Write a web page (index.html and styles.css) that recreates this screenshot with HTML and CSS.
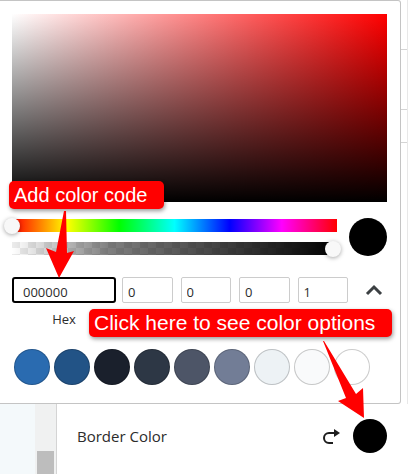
FILE: index.html
```html
<!DOCTYPE html>
<html lang="en">
<head>
  <meta charset="UTF-8">
  <meta name="viewport" content="width=device-width, initial-scale=1.0">
  <title>Border Color</title>
  <link rel="stylesheet" href="styles.css">
</head>

<body>
  <div class="picker-row">
    <div class="picker">
      <div class="saturation"></div>

      <div class="sliders">
        <div class="tracks">
          <div class="track hue"><span class="handle"></span></div>
          <div class="track alpha"><span class="handle"></span></div>
        </div>
        <div class="preview"></div>
      </div>

      <div class="fields">
        <div class="hex-field">
          <input type="text" id="hex" value="000000">
          <label for="hex">Hex</label>
        </div>
        <div class="rgba-fields">
          <input type="text" aria-label="Red" value="0">
          <input type="text" aria-label="Green" value="0">
          <input type="text" aria-label="Blue" value="0">
          <input type="text" aria-label="Alpha" value="1">
        </div>
        <button class="toggle-btn" aria-label="Hide fields">
          <svg width="18" height="12" viewBox="0 0 18 12"><path d="M2 10 L9 3 L16 10" fill="none" stroke="#3c4043" stroke-width="3"/></svg>
        </button>
      </div>

      <div class="swatches">
        <button class="swatch blue" aria-label="Blue"></button>
        <button class="swatch dark-blue" aria-label="Dark blue"></button>
        <button class="swatch ink" aria-label="Ink"></button>
        <button class="swatch slate" aria-label="Slate"></button>
        <button class="swatch gray" aria-label="Gray"></button>
        <button class="swatch light-gray" aria-label="Light gray"></button>
        <button class="swatch mist" aria-label="Mist"></button>
        <button class="swatch snow" aria-label="Snow"></button>
        <button class="swatch white" aria-label="White"></button>
      </div>
    </div>
    <div class="edge">
      <div class="edge-top"></div>
      <div class="edge-title"></div>
      <div class="edge-tab"></div>
      <div class="edge-rest"></div>
    </div>
  </div>

  <div class="settings-row">
    <div class="canvas"></div>
    <div class="scrollbar"><div class="thumb"></div></div>
    <div class="setting">
      <span class="setting-label">Border Color</span>
      <button class="reset-btn" aria-label="Reset">
        <svg width="18" height="18" viewBox="0 0 18 18"><path d="M12 5 H6 A5 5 0 0 0 6 15 H10" fill="none" stroke="#1e1e1e" stroke-width="2"/><path d="M11 1 L17 5 L11 9 Z" fill="#1e1e1e"/></svg>
      </button>
      <button class="color-btn" aria-label="Choose border color"></button>
    </div>
  </div>

  <div class="callout code-callout">Add color code</div>
  <svg class="arrow code-arrow" width="30" height="70" viewBox="0 0 30 70"><path d="M18 2 L20 2 L21 44 L28 42 L13 69 L0 39 L10 43 Z" fill="#f00"/></svg>

  <div class="callout options-callout">Click here to see color options</div>
  <svg class="arrow options-arrow" width="44" height="80" viewBox="0 0 44 80"><path d="M1 2 L2 2 L34 55 L41 49 L42 79 L16 62 L24 59 Z" fill="#f00"/></svg>
</body>
</html>
```
FILE: styles.css
```css
* {
  box-sizing: border-box;
}

body {
  margin: 0;
  min-height: 100vh;
  display: flex;
  flex-direction: column;
  position: relative;
  overflow: hidden;
  background: #fff;
  color: #2c2c2c;
  font-family: "Open Sans", "Noto Sans", sans-serif;
}

button {
  padding: 0;
  border: none;
  background: none;
  cursor: pointer;
}

svg {
  display: block;
}

.picker-row {
  display: flex;
}

.picker {
  flex: 1;
  min-width: 0;
  padding: 13px 13px 18px 12px;
  border: 1px solid #c4c4c4;
  border-left: none;
  border-radius: 0 3px 3px 0;
  background: #fff;
}

.saturation {
  height: 188px;
  background: linear-gradient(to top, #000, transparent), linear-gradient(to right, #fff, #f00);
}

.sliders {
  display: flex;
  gap: 12px;
  margin-top: 16px;
}

.tracks {
  flex: 1;
  display: flex;
  flex-direction: column;
  gap: 10px;
  padding-top: 1px;
}

.track {
  height: 13px;
  position: relative;
}

.hue {
  background: linear-gradient(to right, #f00, #ff0 17%, #0f0 33%, #0ff 50%, #00f 67%, #f0f 83%, #f00);
}

.alpha {
  background: linear-gradient(to right, transparent, rgba(0, 0, 0, 0.5) 30%, #000), repeating-conic-gradient(#fff 0 25%, #ececec 0 50%) 0 0 / 16px 12px;
}

.handle {
  position: absolute;
  top: -1px;
  left: -8px;
  width: 16px;
  height: 16px;
  border-radius: 50%;
  background: #f8f8f8;
  box-shadow: 0 1px 4px rgba(0, 0, 0, 0.35);
}

.alpha .handle {
  left: auto;
  right: -4px;
}

.preview {
  width: 38px;
  height: 38px;
  border-radius: 50%;
  background: #000;
}

.fields {
  display: flex;
  align-items: flex-start;
  margin-top: 21px;
}

.fields input {
  display: block;
  width: 100%;
  min-width: 0;
  height: 26px;
  padding: 3px 5px 0;
  border: 1px solid #ccc;
  border-radius: 2px;
  background: #fff;
  color: #2c2c2c;
  font-family: inherit;
  font-size: 13px;
}

.hex-field {
  width: 104px;
  margin-right: 6px;
  text-align: center;
}

.hex-field input {
  padding-left: 9px;
  border: 2px solid #000;
  border-radius: 3px;
}

.hex-field label {
  display: block;
  margin-top: 6px;
  font-size: 13px;
  line-height: 20px;
}

.rgba-fields {
  flex: 1;
  display: flex;
  gap: 8px;
}

.toggle-btn {
  display: flex;
  align-items: center;
  justify-content: center;
  width: 18px;
  height: 26px;
  margin: 0 4px 0 17px;
}

.swatches {
  display: flex;
  gap: 4px;
  margin-top: 20px;
  padding-left: 2px;
}

.swatch {
  width: 36px;
  height: 36px;
  border: 1px solid rgba(0, 0, 0, 0.2);
  border-radius: 50%;
}

.blue { background: #2a6bb0; }
.dark-blue { background: #225386; }
.ink { background: #1a202c; }
.slate { background: #2d3745; }
.gray { background: #4d5567; }
.light-gray { background: #727d96; }
.mist { background: #edf2f5; }
.snow { background: #f9fafb; }
.white { background: #fff; }

/* sidebar peeking out behind the picker */
.edge {
  width: 7px;
  display: flex;
  flex-direction: column;
  border-right: 1px solid #e8e8e8;
}

.edge-top,
.edge-title,
.edge-tab {
  border-bottom: 1px solid #d4d4d4;
}

.edge-top { height: 50px; }
.edge-title { height: 60px; }
.edge-tab { height: 33px; }
.edge-rest { flex: 1; }

.settings-row {
  flex: 1;
  display: flex;
  min-height: 70px;
}

.canvas {
  width: 35px;
  background: #f4f9fb;
}

.scrollbar {
  width: 21px;
  padding: 47px 2px 0;
  background: #f0f1f1;
}

.thumb {
  height: 100%;
  background: #bdbdbd;
}

.setting {
  flex: 1;
  display: flex;
  align-items: flex-start;
  padding: 15px 21px 0 20px;
  border-left: 1px solid #d4d4d4;
}

.setting-label {
  flex: 1;
  font-size: 15px;
  line-height: 34px;
}

.reset-btn {
  margin: 9px 12px 0 0;
}

.color-btn {
  width: 34px;
  height: 34px;
  border-radius: 50%;
  background: #000;
}

.callout {
  position: absolute;
  padding: 0 5px;
  border-radius: 5px;
  background: #f00;
  box-shadow: 1px 2px 4px rgba(0, 0, 0, 0.4);
  color: #fff;
  font-family: "Liberation Sans", Arial, sans-serif;
  line-height: 28px;
  white-space: nowrap;
}

.code-callout {
  top: 181px;
  left: 9px;
  width: 155px;
  font-size: 20px;
}

.options-callout {
  top: 309px;
  left: 89px;
  width: 303px;
  font-size: 21px;
}

.arrow {
  position: absolute;
}

.code-arrow {
  top: 209px;
  left: 46px;
}

.options-arrow {
  top: 339px;
  left: 322px;
}
```
